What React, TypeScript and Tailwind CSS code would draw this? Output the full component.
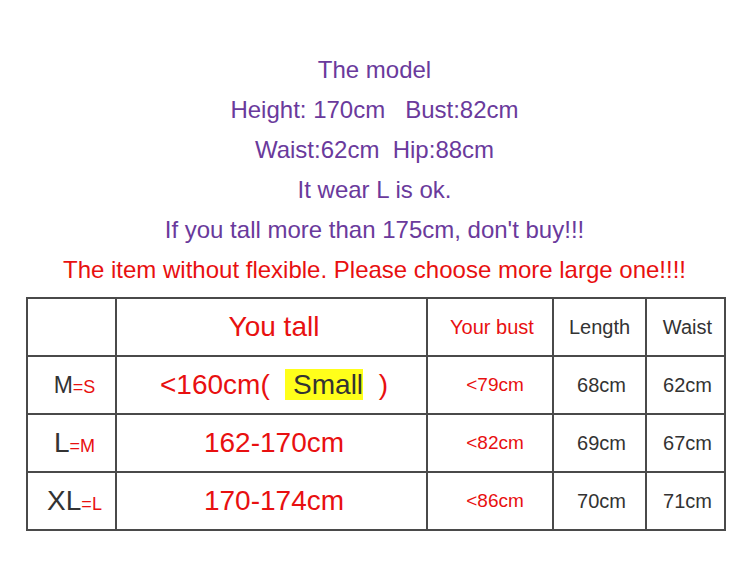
import React from 'react';

const lines = [
  { text: 'The model', red: false },
  { text: 'Height: 170cm\u00a0\u00a0 Bust:82cm', red: false },
  { text: 'Waist:62cm\u00a0 Hip:88cm', red: false },
  { text: 'It wear L is ok.', red: false },
  { text: "If you tall more than 175cm, don't buy!!!", red: false },
  { text: 'The item without flexible. Please choose more large one!!!!', red: true },
];

const rows = [
  { size: 'M', sizeCls: 'text-[23px]', alt: 'S', bust: '<79cm', length: '68cm', waist: '62cm' },
  { size: 'L', sizeCls: 'text-[28px]', alt: 'M', bust: '<82cm', length: '69cm', waist: '67cm' },
  { size: 'XL', sizeCls: 'text-[28px]', alt: 'L', bust: '<86cm', length: '70cm', waist: '71cm' },
];

const cell = 'border-2 border-[#4a4a4a] text-center align-middle p-0';

export default function App() {
  return (
    <div className="w-[741px] h-[561px] bg-white overflow-hidden font-['Liberation_Sans',Arial,sans-serif]">
      {/* model notes */}
      <div className="pt-[50px] pl-[8px] flex flex-col items-center">
        {lines.map((l, i) => (
          <div
            key={i}
            className={`h-[40px] leading-[40px] text-[24px] whitespace-pre ${l.red ? 'text-[#e81010]' : 'text-[#6a3a9c]'}`}
          >
            {l.text}
          </div>
        ))}
      </div>

      {/* size table */}
      <table className="mt-[7px] ml-[26px] w-[700px] table-fixed border-collapse border-2 border-[#4a4a4a]">
        <colgroup>
          <col className="w-[89px]" />
          <col className="w-[311px]" />
          <col className="w-[126px]" />
          <col className="w-[93px]" />
          <col className="w-[79px]" />
        </colgroup>
        <tbody>
          <tr className="h-[58px]">
            <td className={cell}></td>
            <td className={`${cell} text-[28px] text-[#e81010] pl-[5px]`}>You tall</td>
            <td className={`${cell} text-[20px] text-[#e81010] pl-[4px]`}>Your bust</td>
            <td className={`${cell} text-[20px] text-[#333]`}>Length</td>
            <td className={`${cell} text-[20px] text-[#333] pl-[4px]`}>Waist</td>
          </tr>
          {rows.map((r, i) => (
            <tr key={i} className="h-[58px]">
              <td className={`${cell} pl-[6px]`}>
                <span className={`${r.sizeCls} text-[#333]`}>{r.size}</span>
                <span className="text-[18px] text-[#e81010]">={r.alt}</span>
              </td>
              <td className={`${cell} text-[28px] text-[#e81010] pl-[5px] whitespace-pre`}>
                {i === 0 ? (
                  <>
                    {'<160cm(\u00a0\u00a0'}
                    <span className="bg-[#ffff1a] text-[#333]">{'\u00a0Small'}</span>
                    {'\u00a0\u00a0)'}
                  </>
                ) : i === 1 ? (
                  '162-170cm'
                ) : (
                  '170-174cm'
                )}
              </td>
              <td className={`${cell} text-[19px] text-[#e81010] pl-[10px]`}>{r.bust}</td>
              <td className={`${cell} text-[20px] text-[#333] pl-[4px]`}>{r.length}</td>
              <td className={`${cell} text-[20px] text-[#333] pl-[4px]`}>{r.waist}</td>
            </tr>
          ))}
        </tbody>
      </table>
    </div>
  );
}
